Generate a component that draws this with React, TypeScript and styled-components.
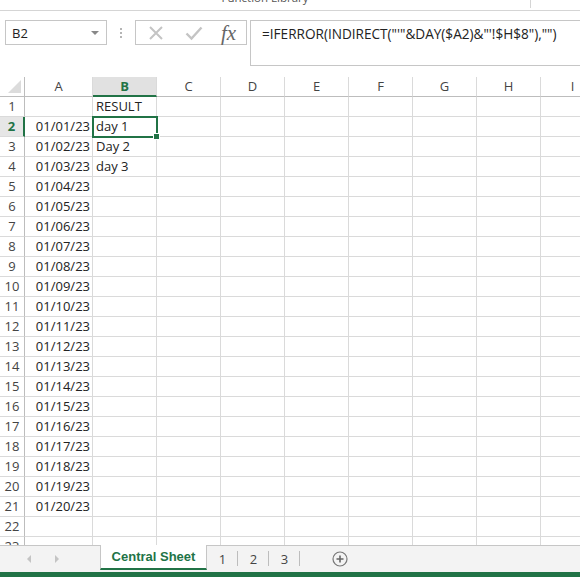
import React from 'react';
import styled, { createGlobalStyle, css } from 'styled-components';

const GREEN = '#217346';
const GRID_LINE = '#dadada';
const FRAME = '#c6c6c6';

const GlobalStyle = createGlobalStyle`
  html, body {
    margin: 0;
    padding: 0;
    background: #fff;
  }
  body {
    font-family: 'Open Sans', Arial, sans-serif;
    color: #222;
  }
`;

const Window = styled.div`
  width: 580px;
  height: 577px;
  display: flex;
  flex-direction: column;
  overflow: hidden;
  background: #fff;
`;

const RibbonTail = styled.div`
  height: 10px;
  flex: none;
  display: flex;
  border-bottom: 1px solid #d5d5d5;
  overflow: hidden;
`;

const GroupLabel = styled.div`
  width: 530px;
  text-align: center;
  font-size: 11.5px;
  line-height: 14px;
  margin-top: -9px;
  color: #555;
`;

const GroupDivider = styled.div`
  width: 1px;
  height: 8px;
  background: #d5d5d5;
`;

const FormulaBar = styled.div`
  height: 65px;
  flex: none;
  display: flex;
  align-items: flex-start;
  padding: 9px 0 0 5px;
  box-sizing: border-box;
`;

const NameBox = styled.div`
  width: 102px;
  height: 25px;
  box-sizing: border-box;
  border: 1px solid ${FRAME};
  display: flex;
  align-items: center;
  justify-content: space-between;
  padding: 0 7px 0 6px;
  font-size: 13px;
`;

const DropArrow = styled.span`
  width: 0;
  height: 0;
  border-left: 4px solid transparent;
  border-right: 4px solid transparent;
  border-top: 4px solid #888;
`;

const Grip = styled.div`
  width: 28px;
  height: 25px;
  display: flex;
  flex-direction: column;
  align-items: center;
  justify-content: center;
  gap: 2px;

  & span {
    width: 2px;
    height: 2px;
    background: #b5b5b5;
  }
`;

const FxBox = styled.div`
  width: 112px;
  height: 25px;
  box-sizing: border-box;
  border: 1px solid ${FRAME};
  display: flex;
  align-items: center;
`;

const FxSlot = styled.div<{ $w: number }>`
  width: ${(p) => p.$w}px;
  height: 100%;
  display: flex;
  align-items: center;
  justify-content: center;
`;

const FxLabel = styled.span`
  font-family: 'Liberation Serif', 'DejaVu Serif', serif;
  font-style: italic;
  font-size: 21px;
  line-height: 20px;
  color: #666;
`;

const FormulaInput = styled.div`
  flex: 1;
  height: 46px;
  margin-left: 3px;
  box-sizing: border-box;
  border: 1px solid ${FRAME};
  border-right: none;
  padding: 4px 11px;
  font-size: 13.6px;
  line-height: 18px;
  white-space: nowrap;
`;

const Sheet = styled.div`
  flex: 1;
  overflow: hidden;
  display: grid;
  grid-template-columns: 25px 68px 64px repeat(7, 64px);
  grid-auto-rows: 20px;
  margin-top: 1px;
`;

const Cell = styled.div<{ $align?: 'left' | 'right'; $selected?: boolean }>`
  box-sizing: border-box;
  border-right: 1px solid ${GRID_LINE};
  border-bottom: 1px solid ${GRID_LINE};
  font-size: 13px;
  line-height: 19px;
  padding: 0 2px 0 3px;
  white-space: nowrap;
  overflow: visible;
  text-align: ${(p) => p.$align || 'left'};
  position: relative;

  ${(p) =>
    p.$selected &&
    css`
      outline: 2px solid ${GREEN};
      outline-offset: -1px;
      z-index: 2;

      &::after {
        content: '';
        position: absolute;
        right: -4px;
        bottom: -4px;
        width: 5px;
        height: 5px;
        background: ${GREEN};
        border: 1px solid #fff;
      }
    `}
`;

const ColHeader = styled.div<{ $active?: boolean }>`
  box-sizing: border-box;
  border-right: 1px solid ${GRID_LINE};
  border-bottom: 1px solid #bdbdbd;
  text-align: center;
  font-size: 13px;
  line-height: 19px;
  color: #444;

  ${(p) =>
    p.$active &&
    css`
      background: #e1e1e1;
      color: ${GREEN};
      font-weight: 700;
      border-bottom: 2px solid ${GREEN};
      line-height: 18px;
    `}
`;

const Corner = styled.div`
  box-sizing: border-box;
  border-right: 1px solid #bdbdbd;
  border-bottom: 1px solid #bdbdbd;
  display: flex;
  align-items: flex-end;
  justify-content: flex-end;
  padding: 0 3px 3px 0;

  &::before {
    content: '';
    width: 0;
    height: 0;
    border-left: 13px solid transparent;
    border-bottom: 13px solid #dcdcdc;
  }
`;

const RowHeader = styled.div<{ $active?: boolean }>`
  box-sizing: border-box;
  border-right: 1px solid #bdbdbd;
  border-bottom: 1px solid ${GRID_LINE};
  text-align: center;
  font-size: 13px;
  line-height: 19px;
  color: #444;

  ${(p) =>
    p.$active &&
    css`
      background: #e6e6e6;
      color: ${GREEN};
      font-weight: 700;
      border-right: 2px solid ${GREEN};
    `}
`;

const TabBar = styled.div`
  height: 27px;
  flex: none;
  box-sizing: border-box;
  border-top: 1px solid ${FRAME};
  background: #f3f3f3;
  display: flex;
  align-items: stretch;
`;

const NavArea = styled.div`
  width: 100px;
  display: flex;
  align-items: center;
  padding-left: 27px;
  gap: 24px;
  box-sizing: border-box;
`;

const NavArrow = styled.span<{ $dir: 'left' | 'right' }>`
  width: 0;
  height: 0;
  border-top: 4px solid transparent;
  border-bottom: 4px solid transparent;
  ${(p) =>
    p.$dir === 'left'
      ? css`border-right: 4px solid #c4c4c4;`
      : css`border-left: 4px solid #c4c4c4;`}
`;

const ActiveTab = styled.div`
  width: 107px;
  margin-top: -1px;
  margin-bottom: 2px;
  box-sizing: border-box;
  background: #fff;
  border-left: 1px solid ${FRAME};
  border-right: 1px solid ${FRAME};
  border-bottom: 2px solid ${GREEN};
  display: flex;
  align-items: center;
  justify-content: center;
  font-family: 'Liberation Sans', Arial, sans-serif;
  font-weight: 700;
  font-size: 13px;
  color: ${GREEN};
`;

const SheetTab = styled.div`
  width: 31px;
  display: flex;
  align-items: center;
  justify-content: center;
  font-size: 13px;
  color: #444;
  position: relative;

  &::after {
    content: '';
    position: absolute;
    right: 0;
    top: 5px;
    bottom: 6px;
    width: 1px;
    background: #bdbdbd;
  }
`;

const AddSheet = styled.div`
  width: 48px;
  display: flex;
  align-items: center;
  justify-content: flex-end;
`;

const StatusStrip = styled.div`
  height: 5px;
  flex: none;
  background: ${GREEN};
`;

const columns = ['A', 'B', 'C', 'D', 'E', 'F', 'G', 'H', 'I'];
const results: Record<number, string> = { 1: 'RESULT', 2: 'day 1', 3: 'Day 2', 4: 'day 3' };

const dateFor = (row: number) =>
  row >= 2 && row <= 21 ? `01/${String(row - 1).padStart(2, '0')}/23` : '';

const CancelIcon = () => (
  <svg width="16" height="16" viewBox="0 0 16 16">
    <path d="M2 2 L14 14 M14 2 L2 14" stroke="#c4c4c4" strokeWidth="2" fill="none" />
  </svg>
);

const EnterIcon = () => (
  <svg width="18" height="16" viewBox="0 0 18 16">
    <path d="M1.5 8.5 L6.5 13.5 L16.5 2.5" stroke="#c4c4c4" strokeWidth="2.4" fill="none" />
  </svg>
);

const PlusCircle = () => (
  <svg width="16" height="16" viewBox="0 0 16 16">
    <circle cx="8" cy="8" r="7" stroke="#777" strokeWidth="1.2" fill="none" />
    <path d="M8 4.5 V11.5 M4.5 8 H11.5" stroke="#666" strokeWidth="1.6" />
  </svg>
);

const App: React.FC = () => {
  const rows = Array.from({ length: 23 }, (_, i) => i + 1);

  return (
    <>
      <GlobalStyle />
      <Window>
        <RibbonTail>
          <GroupLabel>Function Library</GroupLabel>
          <GroupDivider />
        </RibbonTail>

        <FormulaBar>
          <NameBox>
            B2
            <DropArrow />
          </NameBox>
          <Grip>
            <span />
            <span />
            <span />
          </Grip>
          <FxBox>
            <FxSlot $w={39}>
              <CancelIcon />
            </FxSlot>
            <FxSlot $w={38}>
              <EnterIcon />
            </FxSlot>
            <FxSlot $w={31}>
              <FxLabel>fx</FxLabel>
            </FxSlot>
          </FxBox>
          <FormulaInput>=IFERROR(INDIRECT("'"&amp;DAY($A2)&amp;"'!$H$8"),"")</FormulaInput>
        </FormulaBar>

        <Sheet>
          <Corner />
          {columns.map((c) => (
            <ColHeader key={c} $active={c === 'B'}>
              {c}
            </ColHeader>
          ))}
          {rows.map((r) => (
            <React.Fragment key={r}>
              <RowHeader $active={r === 2}>{r}</RowHeader>
              <Cell $align="right">{dateFor(r)}</Cell>
              <Cell $selected={r === 2}>{results[r] || ''}</Cell>
              {columns.slice(2).map((c) => (
                <Cell key={c} />
              ))}
            </React.Fragment>
          ))}
        </Sheet>

        <TabBar>
          <NavArea>
            <NavArrow $dir="left" />
            <NavArrow $dir="right" />
          </NavArea>
          <ActiveTab>Central Sheet</ActiveTab>
          <SheetTab>1</SheetTab>
          <SheetTab>2</SheetTab>
          <SheetTab>3</SheetTab>
          <AddSheet>
            <PlusCircle />
          </AddSheet>
        </TabBar>
        <StatusStrip />
      </Window>
    </>
  );
};

export default App;
